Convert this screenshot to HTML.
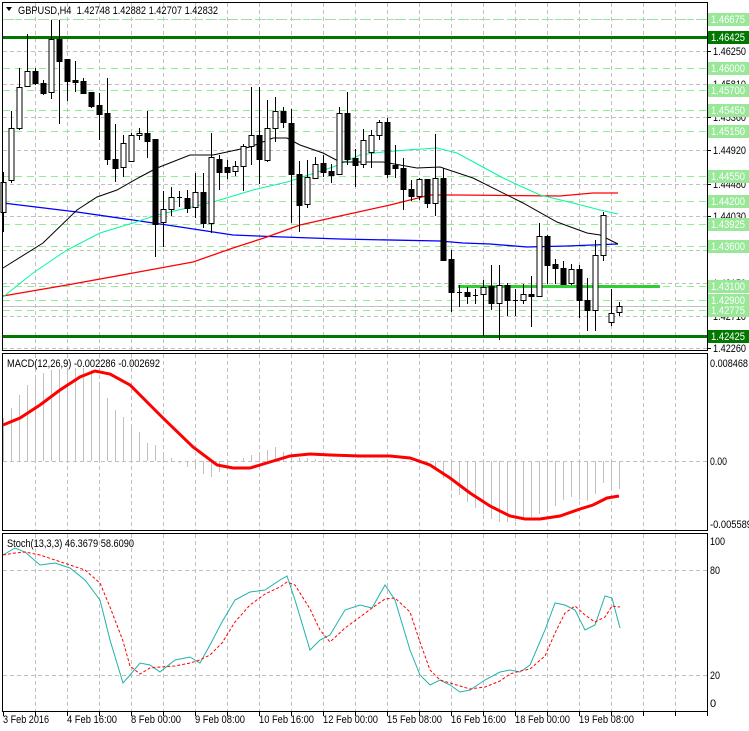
<!DOCTYPE html>
<html><head><meta charset="utf-8"><style>
html,body{margin:0;padding:0;background:#fff;width:749px;height:731px;overflow:hidden}
svg{display:block;font-family:"Liberation Sans",sans-serif;font-size:11px}
</style></head><body>
<svg id="s" width="749" height="731" viewBox="0 0 749 731" xmlns="http://www.w3.org/2000/svg">
<g id="grid"></g>
<g id="lvl"></g>
<g id="ma" fill="none"></g>
<g id="cd"></g>
<g id="macd"></g>
<g id="st" fill="none"></g>
<g id="frame" fill="none" stroke="#000" stroke-width="1">
<rect x="2.5" y="2.5" width="705" height="348"/>
<rect x="2.5" y="353.5" width="705" height="177"/>
<rect x="2.5" y="533.5" width="705" height="178"/>
</g>
<g id="lab"></g>
<polygon points="6,7 12,7 9,11" fill="#000"/>
<text x="18" y="14" fill="#000" textLength="200" lengthAdjust="spacingAndGlyphs">GBPUSD,H4&#160; 1.42748 1.42882 1.42707 1.42832</text>
<text x="7" y="367" fill="#000" textLength="153" lengthAdjust="spacingAndGlyphs">MACD(12,26,9) -0.002286 -0.002692</text>
<text x="7" y="547" fill="#000" textLength="127" lengthAdjust="spacingAndGlyphs">Stoch(13,3,3) 46.3679 58.6090</text>
<g fill="#000" lengthAdjust="spacingAndGlyphs">
<text x="710" y="367" textLength="38" lengthAdjust="spacingAndGlyphs">0.008468</text>
<text x="710" y="465" textLength="17" lengthAdjust="spacingAndGlyphs">0.00</text>
<text x="710" y="528" textLength="42" lengthAdjust="spacingAndGlyphs">-0.005589</text>
<text x="710" y="545" textLength="15" lengthAdjust="spacingAndGlyphs">100</text>
<text x="710" y="574" textLength="10" lengthAdjust="spacingAndGlyphs">80</text>
<text x="710" y="679" textLength="10" lengthAdjust="spacingAndGlyphs">20</text>
<text x="710" y="707">0</text>
<text x="3" y="723" textLength="46" lengthAdjust="spacingAndGlyphs">3 Feb 2016</text>
<text x="67" y="723" textLength="50" lengthAdjust="spacingAndGlyphs">4 Feb 16:00</text>
<text x="131" y="723" textLength="50" lengthAdjust="spacingAndGlyphs">8 Feb 00:00</text>
<text x="195" y="723" textLength="50" lengthAdjust="spacingAndGlyphs">9 Feb 08:00</text>
<text x="259" y="723" textLength="55" lengthAdjust="spacingAndGlyphs">10 Feb 16:00</text>
<text x="323" y="723" textLength="55" lengthAdjust="spacingAndGlyphs">12 Feb 00:00</text>
<text x="387" y="723" textLength="55" lengthAdjust="spacingAndGlyphs">15 Feb 08:00</text>
<text x="451" y="723" textLength="55" lengthAdjust="spacingAndGlyphs">16 Feb 16:00</text>
<text x="515" y="723" textLength="55" lengthAdjust="spacingAndGlyphs">18 Feb 00:00</text>
<text x="579" y="723" textLength="55" lengthAdjust="spacingAndGlyphs">19 Feb 08:00</text>
</g>
</svg>
<script>
const NS="http://www.w3.org/2000/svg";
function el(p,t,a){const e=document.createElementNS(NS,t);for(const k in a)e.setAttribute(k,a[k]);document.getElementById(p).appendChild(e);return e;}
for(let x=35;x<708;x+=32){
 el('grid','line',{x1:x+.5,y1:3,x2:x+.5,y2:350,stroke:'#c0c0c0','stroke-dasharray':'4,3'});
 el('grid','line',{x1:x+.5,y1:354,x2:x+.5,y2:530,stroke:'#c0c0c0','stroke-dasharray':'4,3'});
 el('grid','line',{x1:x+.5,y1:534,x2:x+.5,y2:711,stroke:'#c0c0c0','stroke-dasharray':'4,3'});
 el('grid','line',{x1:x+.5,y1:712,x2:x+.5,y2:716,stroke:'#000'});
}
el('grid','line',{x1:3.5,y1:712,x2:3.5,y2:716,stroke:'#000'});
const hg=[{y:51,t:'1.46250'},{y:84,t:'1.45810'},{y:117,t:'1.45360'},{y:150,t:'1.44920'},{y:184,t:'1.44480'},{y:216,t:'1.44030'},{y:283,t:'1.43150'},{y:316,t:'1.42710'},{y:348,t:'1.42260'},{y:19},{y:250}];
hg.forEach(h=>{el('grid','line',{x1:3,y1:h.y+.5,x2:707,y2:h.y+.5,stroke:'#c0c0c0','stroke-dasharray':'4,3'});
 if(h.t){el('lab','line',{x1:708,y1:h.y+.5,x2:711,y2:h.y+.5,stroke:'#000'});const t=el('lab','text',{x:713,y:h.y+4,fill:'#000',textLength:33,lengthAdjust:'spacingAndGlyphs'});t.textContent=h.t;}});
[461,570,675].forEach(y=>el('grid','line',{x1:3,y1:y+.5,x2:707,y2:y+.5,stroke:'#c0c0c0','stroke-dasharray':'4,3'}));
const lg=[[19,'1.46675'],[68,'1.46000'],[90,'1.45700'],[110,'1.45450'],[131,'1.45150'],[176,'1.44550'],[201,'1.44200'],[224,'1.43925'],[246,'1.43600'],[286,'1.43100'],[300,'1.42900'],[310,'1.42775']];
lg.forEach(l=>{el('lvl','line',{x1:3,y1:l[0]+.5,x2:707,y2:l[0]+.5,stroke:'#90ee90','stroke-dasharray':'7,5'});});
el('lvl','line',{x1:3,y1:306.5,x2:707,y2:306.5,stroke:'#c0c0c0'});
el('lvl','line',{x1:3,y1:37.5,x2:707,y2:37.5,stroke:'#007800','stroke-width':3});
el('lvl','line',{x1:3,y1:336.5,x2:707,y2:336.5,stroke:'#007800','stroke-width':3});
el('lvl','line',{x1:458,y1:286.5,x2:660,y2:286.5,stroke:'#32cd32','stroke-width':3});
lg.forEach(l=>{el('lab','rect',{x:708,y:l[0]-6,width:41,height:13,fill:'#98e898'});const t=el('lab','text',{x:711,y:l[0]+4,fill:'#fff',textLength:34,lengthAdjust:'spacingAndGlyphs'});t.textContent=l[1];});
[[37,'1.46425'],[336,'1.42425']].forEach(l=>{el('lab','rect',{x:708,y:l[0]-6,width:41,height:13,fill:'#007800'});const t=el('lab','text',{x:711,y:l[0]+4,fill:'#fff',textLength:34,lengthAdjust:'spacingAndGlyphs'});t.textContent=l[1];});
function pl(g,pts,c,w,da){const a={points:pts.map(p=>p.join(',')).join(' '),stroke:c,'stroke-width':w||1,fill:'none'};if(da)a['stroke-dasharray']=da;el(g,'polyline',a);}
pl('ma',[[3,203],[77,212],[133,220],[167,225],[233,235],[283,237],[340,239],[440,241],[463,243],[490,244],[527,247],[567,246],[618,244]],'#0000ff',1.3);
pl('ma',[[3,296],[67,285],[133,273],[193,262],[233,248],[267,237],[300,225],[340,216],[390,205],[430,195],[457,195],[560,196],[593,193],[618,193]],'#ff0000',1.3);
pl('ma',[[3,297],[33,273],[67,250],[100,233],[133,223],[157,215],[213,202],[253,190],[287,182],[333,167],[360,155],[383,152],[407,150],[437,148],[457,153],[503,178],[540,195],[573,203],[600,210],[618,214]],'#00fa9a',1);
pl('ma',[[3,268],[43,243],[77,210],[97,197],[117,190],[140,177],[157,168],[190,155],[213,155],[250,147],[273,138],[287,138],[300,145],[323,153],[340,162],[383,162],[417,168],[440,167],[473,178],[523,203],[557,222],[587,233],[600,235],[618,244]],'#000',1);
const C=[[3,182,212,172,232,0],[11,128,180,111,183,0],[19,87,128,68,130,0],[27,71,86,34,87,0],[35,71,83,68,85,1],[43,83,93,80,95,1],[51,39,92,20,99,0],[59,39,61,20,124,1],[67,59,81,59,101,1],[75,80,82,61,92,1],[83,81,93,78,93,1],[91,92,106,92,108,1],[99,105,114,93,140,1],[107,113,159,78,165,1],[115,159,168,124,182,1],[123,143,167,135,177,0],[131,135,161,133,161,0],[139,133,135,128,140,0],[147,133,141,111,158,1],[155,139,224,139,257,1],[163,209,222,191,247,0],[171,197,209,187,216,0],[179,197,198,191,207,1],[187,198,208,190,213,1],[195,192,207,173,218,0],[203,192,223,173,228,1],[211,157,223,133,233,0],[219,159,172,155,190,1],[227,167,172,160,179,1],[235,166,171,161,176,0],[243,146,166,144,191,0],[251,135,146,87,165,0],[259,135,159,87,184,1],[267,128,160,100,162,0],[275,111,128,97,142,0],[283,111,122,107,128,1],[291,123,174,109,223,1],[299,174,205,161,232,1],[307,177,204,160,208,0],[315,164,178,157,179,0],[323,163,172,155,177,1],[331,171,175,164,183,1],[339,113,174,107,175,0],[347,113,159,92,165,1],[355,158,165,149,187,1],[363,140,164,129,168,0],[371,135,152,130,168,0],[379,122,135,120,140,0],[387,122,174,118,178,1],[395,165,168,145,178,1],[403,168,189,158,210,1],[411,189,196,180,201,1],[419,179,196,178,200,0],[427,179,203,179,208,1],[435,178,203,134,216,0],[443,178,260,168,260,1],[451,259,292,250,312,1],[459,292,293,285,307,1],[467,292,296,287,304,1],[475,295,296,289,304,1],[483,287,294,280,336,0],[491,286,303,265,310,1],[499,285,303,265,340,0],[507,285,300,283,316,1],[515,300,301,289,316,1],[523,294,300,284,304,0],[531,294,296,276,327,1],[539,236,296,223,297,0],[547,236,265,235,284,1],[555,264,268,259,284,1],[563,268,284,261,283,1],[571,269,283,264,285,0],[579,269,300,265,318,1],[587,300,310,278,331,1],[595,255,310,240,331,0],[603,215,255,212,261,0],[611,313,322,289,326,0],[619,306,312,302,316,0]];
C.forEach(c=>{const[x,t,b,h,l,k]=c;
 el('cd','line',{x1:x+.5,y1:h,x2:x+.5,y2:l,stroke:'#000'});
 if(b-t<2){el('cd','line',{x1:x-2,y1:t+.5,x2:x+3,y2:t+.5,stroke:'#000'});}
 else el('cd','rect',{x:x-2,y:t+.5,width:5,height:b-t,fill:k?'#000':'#fff',stroke:'#000'});});
const H=[418,408,395,385,378,373,370,369,369,368,368,370,386,398,410,417,425,432,443,445,455,458,463,467,470,474,477,472,466,462,458,455,452,450,447,452,456,458,458,459,458,459,460,461,461,461,461,461,461,461,461,461,464,466,470,478,487,495,502,508,514,519,522,522,521,520,517,514,510,506,500,497,500,501,494,483,491,489];
H.forEach((y,i)=>{const x=3+i*8+.5;el('macd','line',{x1:x,y1:461,x2:x,y2:y,stroke:'#c0c0c0'});});
pl('macd',[[3,425],[20,418],[40,405],[60,390],[80,377],[95,371],[110,374],[130,385],[163,418],[193,447],[217,465],[233,468],[250,468],[270,462],[290,456],[310,454],[330,455],[360,456],[390,456],[410,458],[430,465],[450,478],[470,493],[490,506],[510,516],[525,519],[540,519],[560,516],[580,509],[593,505],[607,498],[619,496]],'#ff0000',3);
const M=[[3,555],[15,548],[25,552],[40,565],[55,563],[70,568],[85,580],[100,600],[110,640],[123,683],[130,675],[140,663],[150,665],[160,672],[175,660],[190,657],[200,663],[210,645],[222,622],[235,600],[250,592],[265,590],[280,580],[287,576],[295,600],[310,650],[320,640],[330,635],[345,610],[360,605],[372,608],[385,585],[395,600],[410,650],[420,675],[430,685],[440,680],[450,685],[460,692],[470,690],[485,680],[500,672],[510,670],[520,672],[530,665],[545,630],[555,603],[565,605],[575,610],[585,630],[595,625],[605,596],[612,598],[620,628]];
pl('st',M,'#20b2aa',1);
const S=M.map((p,i)=>{const a=M[Math.max(0,i-1)],b=M[Math.max(0,i-2)];return[p[0],Math.round((p[1]+a[1]+b[1])/3)];});
pl('st',S,'#ff0000',1,'3,2');
</script>
</body></html>
